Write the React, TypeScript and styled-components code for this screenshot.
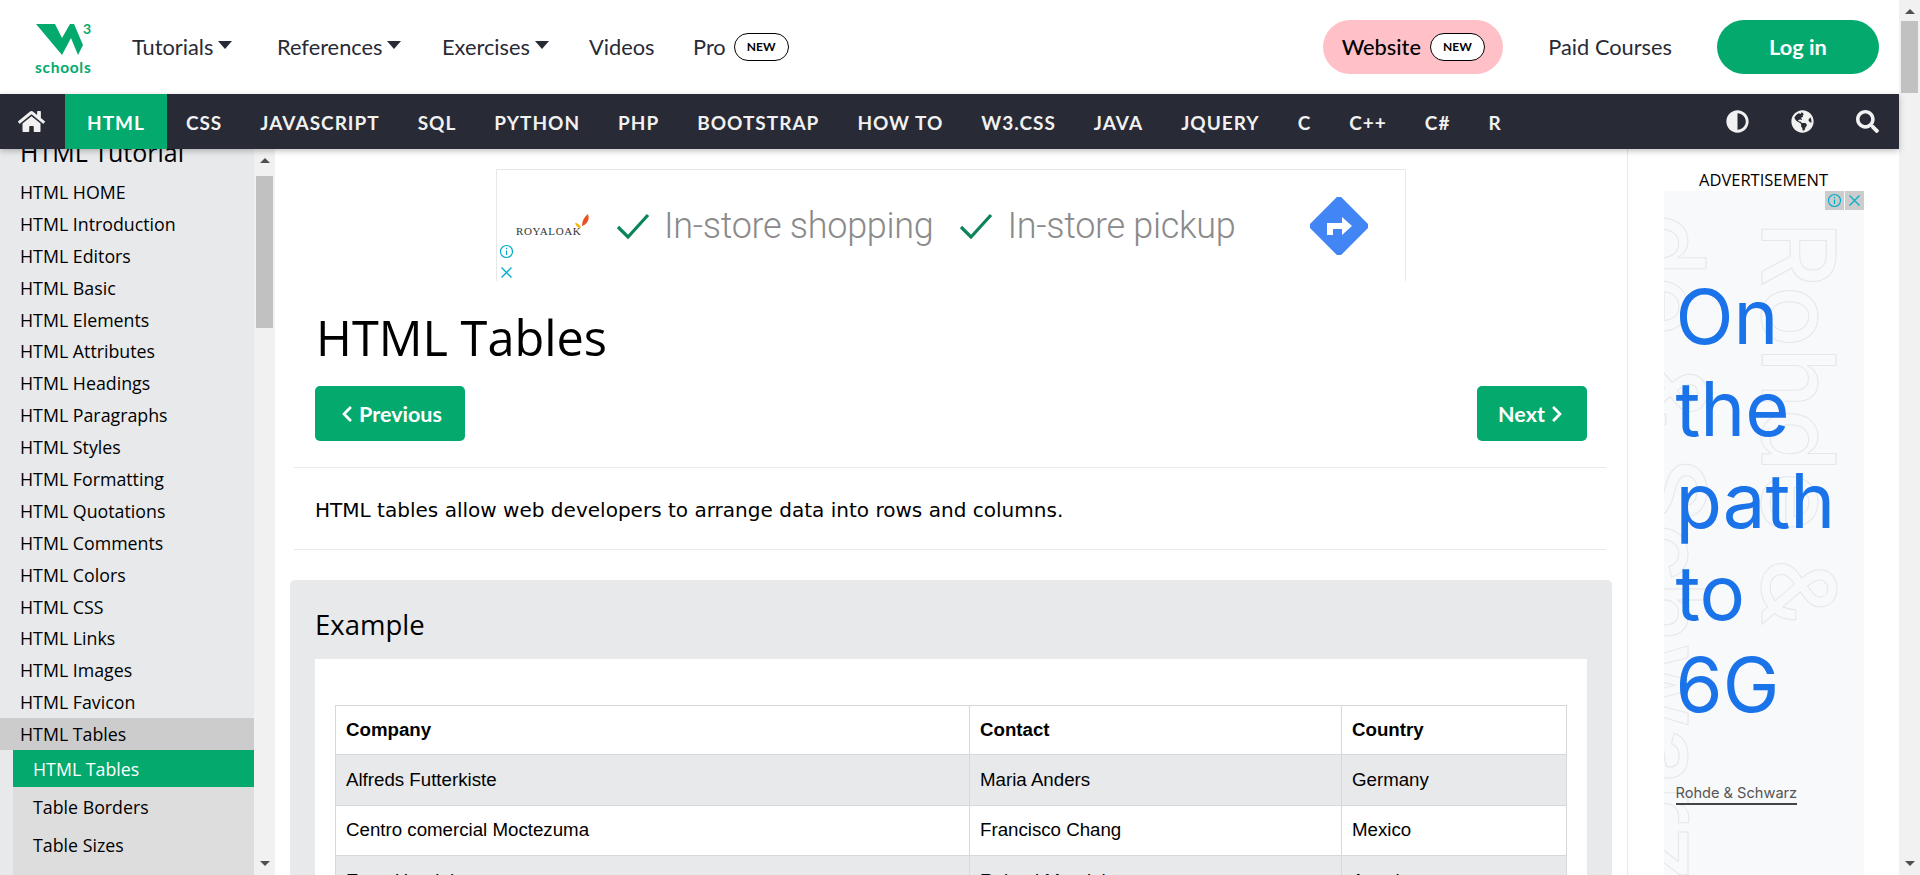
import styled, { createGlobalStyle } from 'styled-components';
import { FaAdjust, FaChevronLeft, FaChevronRight, FaGlobeAmericas, FaHome, FaSearch } from 'react-icons/fa';

const GlobalStyle = createGlobalStyle`
  html, body {
    margin: 0;
    height: 100%;
    overflow: hidden;
    background: #fff;
  }
`;

const green = '#04AA6D';
const uiFont = `"Open Sans", "Noto Sans", sans-serif`;
const navFont = `Lato, "Noto Sans", sans-serif`;

const Shell = styled.div`
  display: flex;
  height: 875px;
  width: 1920px;
  overflow: hidden;
`;

const Page = styled.div`
  flex: 1;
  min-width: 0;
  display: flex;
  flex-direction: column;
`;

const ScrollTrack = styled.div`
  width: 21px;
  flex: none;
  background: #f1f1f1;
  display: flex;
  flex-direction: column;
  align-items: center;
  height: 100%;
  box-sizing: border-box;
`;

const ScrollArrow = styled.div<{ $down?: boolean }>`
  width: 0;
  height: 0;
  margin: ${(p) => (p.$down ? 'auto 0 9px' : '9px 0 0')};
  border-left: 5px solid transparent;
  border-right: 5px solid transparent;
  ${(p) => (p.$down ? 'border-top: 5px solid #505050;' : 'border-bottom: 5px solid #505050;')}
`;

const ScrollThumb = styled.div<{ $gap: number; $height: number }>`
  width: 17px;
  height: ${(p) => p.$height}px;
  margin-top: ${(p) => p.$gap}px;
  background: #c1c1c1;
  flex: none;
`;

const TopBar = styled.header`
  height: 94px;
  flex: none;
  display: flex;
  align-items: center;
  padding: 0 20px 1px 35px;
  box-sizing: border-box;
  background: #fff;
  font-family: ${navFont};
  font-size: 21.8px;
  color: #282a35;
`;

const Logo = styled.div`
  width: 58px;
  margin: 24px 39px 0 0;
  align-self: flex-start;
  color: ${green};
  display: flex;
  flex-direction: column;
`;

const LogoMark = styled.div`
  display: flex;
  align-items: flex-start;
  height: 35px;
`;

const LogoThree = styled.span`
  font-family: ${navFont};
  font-size: 14px;
  font-weight: 700;
  line-height: 10px;
  margin-left: -1px;
`;

const LogoWord = styled.span`
  font-family: ${navFont};
  font-size: 15.5px;
  font-weight: 700;
  line-height: 16px;
  letter-spacing: 0.7px;
`;

const TopLink = styled.span<{ $width: number }>`
  width: ${(p) => p.$width}px;
  flex: none;
  display: flex;
  align-items: center;
  gap: 5px;
`;

const ProLink = styled(TopLink)`
  gap: 8px;
`;

const Caret = styled.i`
  width: 0;
  height: 0;
  margin-top: -3px;
  border-left: 7px solid transparent;
  border-right: 7px solid transparent;
  border-top: 8px solid #282a35;
`;

const NewBadge = styled.span`
  width: 55px;
  height: 28px;
  box-sizing: border-box;
  border: 1px solid #000;
  border-radius: 14px;
  background: #fff;
  color: #000;
  font-family: ${navFont};
  font-size: 12px;
  font-weight: 700;
  display: flex;
  align-items: center;
  justify-content: center;
`;

const RightGroup = styled.div`
  margin-left: auto;
  display: flex;
  align-items: center;
`;

const WebsitePill = styled.span`
  width: 180px;
  height: 54px;
  border-radius: 27px;
  background: #ffc0c7;
  color: #000;
  display: flex;
  align-items: center;
  justify-content: center;
  gap: 9px;
  font-weight: 500;
`;

const PaidLink = styled.span`
  margin: 0 45px;
`;

const LoginPill = styled.span`
  width: 162px;
  height: 54px;
  border-radius: 27px;
  background: ${green};
  color: #fff;
  font-weight: 700;
  display: flex;
  align-items: center;
  justify-content: center;
`;

const NavBar = styled.nav`
  height: 55px;
  flex: none;
  display: flex;
  align-items: stretch;
  background: #282a35;
  color: #f1f1f1;
  position: relative;
  z-index: 2;
  box-shadow: 0 2px 6px rgba(0, 0, 0, 0.25);
  font-family: ${navFont};
  font-size: 19px;
  font-weight: 700;
  letter-spacing: 1px;
`;

const NavItem = styled.span<{ $active?: boolean }>`
  padding: 1px ${(p) => (p.$active ? 22 : 19)}px 0;
  display: flex;
  align-items: center;
  background: ${(p) => (p.$active ? green : 'transparent')};
  color: ${(p) => (p.$active ? '#fff' : '#f1f1f1')};
`;

const HomeCell = styled.span`
  width: 65px;
  font-size: 27px;
  display: flex;
  align-items: center;
  justify-content: center;
  padding-right: 3px;
  box-sizing: border-box;
`;

const NavIcons = styled.div`
  margin-left: auto;
  padding-right: 20px;
  display: flex;
  align-items: center;
  gap: 42px;
  font-size: 23px;

  svg {
    display: block;
  }
`;

const Body = styled.div`
  flex: 1;
  min-height: 0;
  display: flex;
`;

const Sidebar = styled.aside`
  width: 254px;
  flex: none;
  background: #e7e9eb;
  overflow: hidden;
  font-family: ${uiFont};
  font-size: 17.8px;
  color: #000;
`;

const SideTitle = styled.div`
  height: 42px;
  margin-top: -15px;
  padding-left: 20px;
  font-size: 25px;
  line-height: 37px;
`;

const SideItem = styled.div<{ $open?: boolean }>`
  height: 31.9px;
  line-height: 33px;
  padding-left: 20px;
  white-space: nowrap;
  background: ${(p) => (p.$open ? '#ccc' : 'transparent')};
`;

const SubList = styled.div`
  margin-left: 13px;
  background: #ddd;
  height: 200px;
`;

const SubItem = styled.div<{ $active?: boolean }>`
  height: ${(p) => (p.$active ? 37 : 38)}px;
  line-height: ${(p) => (p.$active ? 39 : 41)}px;
  padding-left: 20px;
  background: ${(p) => (p.$active ? green : 'transparent')};
  color: ${(p) => (p.$active ? '#fff' : '#000')};
`;

const Main = styled.main`
  flex: 1;
  min-width: 0;
  padding: 20px 15px 0 15px;
  border-right: 1px solid #e7e9eb;
  overflow: hidden;
`;

const Banner = styled.div`
  position: relative;
  width: 910px;
  height: 112px;
  box-sizing: border-box;
  margin-left: 206px;
  border: 1px solid #e8e8e8;
  border-bottom: none;
  display: flex;
  align-items: center;
  padding: 0 0 0 19px;
  font-family: Roboto, sans-serif;
  font-size: 36px;
  font-weight: 300;
  color: #8a8a8a;
`;

const RoyalOak = styled.span`
  position: relative;
  width: 80px;
  font-family: 'Liberation Serif', serif;
  font-size: 11px;
  letter-spacing: 0.6px;
  color: #333;
  margin-top: 10px;
  flex: none;
`;

const Leaf = styled.svg`
  position: absolute;
  left: 58px;
  top: -11px;
`;

const CheckMark = styled.svg<{ $gap: number }>`
  margin: 0 14px 0 ${(p) => p.$gap}px;
  flex: none;
`;

const BannerText = styled.span`
  letter-spacing: -0.3px;
  white-space: nowrap;
`;

const DirectionSign = styled.svg`
  margin-left: auto;
  margin-right: 37px;
`;

const AdMarks = styled.div`
  position: absolute;
  left: 2px;
  top: 74px;
  display: flex;
  flex-direction: column;
  gap: 6px;
`;

const PageTitle = styled.h1`
  margin: 28px 0 0 26px;
  font-family: ${uiFont};
  font-weight: 400;
  font-size: 48.7px;
  line-height: 57px;
  color: #000;
`;

const PagerRow = styled.div`
  display: flex;
  justify-content: space-between;
  padding: 0 25px;
  margin-top: 20px;
`;

const PagerButton = styled.span<{ $width: number }>`
  width: ${(p) => p.$width}px;
  height: 55px;
  border-radius: 5px;
  background: ${green};
  color: #fff;
  font-family: ${navFont};
  font-size: 21.5px;
  font-weight: 700;
  display: flex;
  align-items: center;
  justify-content: center;
  gap: 3px;

  svg {
    font-size: 18px;
  }
`;

const Rule = styled.hr<{ $gap?: number }>`
  border: none;
  border-top: 1px solid #e7e9eb;
  margin: ${(p) => p.$gap ?? 0}px 6px 0 4px;
`;

const Intro = styled.p`
  margin: 0;
  padding: 2px 0 0 25px;
  box-sizing: border-box;
  height: 81px;
  display: flex;
  align-items: center;
  font-family: 'DejaVu Sans', Verdana, sans-serif;
  font-size: 20.05px;
  color: #000;
`;

const ExamplePanel = styled.section`
  margin-top: 30px;
  background: #e7e9eb;
  border-radius: 5px;
  padding: 0 25px;
  height: 400px;
`;

const ExampleTitle = styled.h2`
  margin: 0;
  height: 79px;
  padding-top: 10px;
  box-sizing: border-box;
  display: flex;
  align-items: center;
  font-family: ${uiFont};
  font-size: 27.5px;
  font-weight: 400;
  color: #000;
`;

const ExampleBody = styled.div`
  background: #fff;
  padding: 46px 20px 0;
  height: 320px;
`;

const DataTable = styled.table`
  width: 100%;
  table-layout: fixed;
  border-collapse: collapse;
  font-family: 'Liberation Sans', Arial, sans-serif;
  font-size: 18.7px;
  color: #000;
`;

const HeadCell = styled.th<{ $width?: number }>`
  ${(p) => (p.$width ? `width: ${p.$width}px;` : '')}
  box-sizing: border-box;
  border: 1px solid #d6d8da;
  height: 49.33px;
  padding: 0 10px;
  text-align: left;
  font-weight: 700;
`;

const DataRow = styled.tr`
  &:nth-child(odd) {
    background: #e7e9eb;
  }
`;

const DataCell = styled.td`
  border: 1px solid #d6d8da;
  height: 49.33px;
  padding: 0 10px;
`;

const AdColumn = styled.aside`
  width: 271px;
  flex: none;
  display: flex;
  flex-direction: column;
  align-items: center;
`;

const AdLabel = styled.div`
  height: 42px;
  padding-top: 21px;
  box-sizing: border-box;
  line-height: 20px;
  font-family: ${uiFont};
  font-size: 16.5px;
  color: #000;
`;

const TowerAd = styled.div`
  position: relative;
  width: 200px;
  flex: 1;
  overflow: hidden;
  background: #f8f9fb;
  padding: 79px 0 0 12px;
  box-sizing: border-box;
  display: flex;
  flex-direction: column;
`;

const GhostWord = styled.span<{ $left: number; $top: number }>`
  position: absolute;
  left: ${(p) => p.$left}px;
  top: ${(p) => p.$top}px;
  writing-mode: vertical-rl;
  font-family: Inter, sans-serif;
  font-size: 102px;
  font-weight: 500;
  line-height: 1;
  white-space: nowrap;
  color: transparent;
  -webkit-text-stroke: 1px #e6e7ea;
`;

const Headline = styled.div`
  position: relative;
  font-family: Inter, sans-serif;
  font-size: 76px;
  line-height: 92px;
  color: #1a73e8;
`;

const Advertiser = styled.span`
  position: relative;
  align-self: flex-start;
  margin: 54px 0 0 0;
  padding-bottom: 1px;
  border-bottom: 2px solid #444;
  font-family: Inter, sans-serif;
  font-size: 14.6px;
  color: #555;
`;

const AdControls = styled.div`
  position: absolute;
  right: 0;
  top: 0;
  display: flex;
  gap: 1px;
`;

const AdControl = styled.span`
  width: 19px;
  height: 19px;
  background: #ccc;
  display: flex;
  align-items: center;
  justify-content: center;
`;

const topicLinks = [
  'HTML HOME', 'HTML Introduction', 'HTML Editors', 'HTML Basic', 'HTML Elements', 'HTML Attributes',
  'HTML Headings', 'HTML Paragraphs', 'HTML Styles', 'HTML Formatting', 'HTML Quotations', 'HTML Comments',
  'HTML Colors', 'HTML CSS', 'HTML Links', 'HTML Images', 'HTML Favicon',
];

const navLinks = ['CSS', 'JAVASCRIPT', 'SQL', 'PYTHON', 'PHP', 'BOOTSTRAP', 'HOW TO', 'W3.CSS', 'JAVA', 'JQUERY', 'C', 'C++', 'C#', 'R'];

const rows = [
  ['Alfreds Futterkiste', 'Maria Anders', 'Germany'],
  ['Centro comercial Moctezuma', 'Francisco Chang', 'Mexico'],
  ['Ernst Handel', 'Roland Mendel', 'Austria'],
];

function InfoIcon() {
  return (
    <svg width="15" height="15" viewBox="0 0 15 15" fill="none" stroke="#00aecd" strokeWidth="1.2">
      <circle cx="7.5" cy="7.5" r="6" />
      <path d="M7.5 6.5v4.5M7.5 3.8v1.4" />
    </svg>
  );
}

function CloseIcon() {
  return (
    <svg width="15" height="15" viewBox="0 0 15 15" fill="none" stroke="#00aecd" strokeWidth="1.3">
      <path d="M2.5 2.5l10 10M12.5 2.5l-10 10" />
    </svg>
  );
}

function Check({ gap }: { gap: number }) {
  return (
    <CheckMark $gap={gap} width="34" height="26" viewBox="0 0 34 26" fill="none" stroke="#0b8457" strokeWidth="3.2">
      <path d="M2 14l10 10L32 2" />
    </CheckMark>
  );
}

export default function App() {
  return (
    <>
      <GlobalStyle />
      <Shell>
        <Page>
          <TopBar>
            <Logo>
              <LogoMark>
                <svg width="49" height="32" viewBox="0 0 49 32" fill="currentColor">
                  <path d="M1 0H20L27 14L35 0H39L48 21L43 31L36 14L27 31Z" />
                </svg>
                <LogoThree>3</LogoThree>
              </LogoMark>
              <LogoWord>schools</LogoWord>
            </Logo>
            <TopLink $width={145}>Tutorials<Caret /></TopLink>
            <TopLink $width={165}>References<Caret /></TopLink>
            <TopLink $width={147}>Exercises<Caret /></TopLink>
            <TopLink $width={104}>Videos</TopLink>
            <ProLink $width={110}>Pro<NewBadge>NEW</NewBadge></ProLink>
            <RightGroup>
              <WebsitePill>Website<NewBadge>NEW</NewBadge></WebsitePill>
              <PaidLink>Paid Courses</PaidLink>
              <LoginPill>Log in</LoginPill>
            </RightGroup>
          </TopBar>

          <NavBar>
            <HomeCell><FaHome /></HomeCell>
            <NavItem $active>HTML</NavItem>
            {navLinks.map((link) => (
              <NavItem key={link}>{link}</NavItem>
            ))}
            <NavIcons>
              <FaAdjust />
              <FaGlobeAmericas />
              <FaSearch />
            </NavIcons>
          </NavBar>

          <Body>
            <Sidebar>
              <SideTitle>HTML Tutorial</SideTitle>
              {topicLinks.map((link) => (
                <SideItem key={link}>{link}</SideItem>
              ))}
              <SideItem $open>HTML Tables</SideItem>
              <SubList>
                <SubItem $active>HTML Tables</SubItem>
                <SubItem>Table Borders</SubItem>
                <SubItem>Table Sizes</SubItem>
              </SubList>
            </Sidebar>
            <ScrollTrack>
              <ScrollArrow />
              <ScrollThumb $gap={13} $height={152} />
              <ScrollArrow $down />
            </ScrollTrack>

            <Main>
              <Banner>
                <RoyalOak>
                  ROYALOAK
                  <Leaf width="16" height="18" viewBox="0 0 16 18">
                    <path d="M14 0c2 6-1 10-6 12 0-5 2-9 6-12z" fill="#e8501f" />
                    <path d="M1 9c3 0 5 2 6 5-3 0-5-2-6-5z" fill="#f5b400" />
                  </Leaf>
                </RoyalOak>
                <Check gap={20} />
                <BannerText>In-store shopping</BannerText>
                <Check gap={26} />
                <BannerText>In-store pickup</BannerText>
                <DirectionSign width="58" height="58" viewBox="0 0 58 58">
                  <path d="M29 0L58 29L29 58L0 29Z" fill="#4285f4" stroke="#4285f4" strokeWidth="3" strokeLinejoin="round" />
                  <path d="M20 39V27h15v-6l10 9-10 9v-6h-9v6z" fill="#fff" transform="translate(-3 -1)" />
                </DirectionSign>
                <AdMarks>
                  <InfoIcon />
                  <CloseIcon />
                </AdMarks>
              </Banner>

              <PageTitle>HTML Tables</PageTitle>

              <PagerRow>
                <PagerButton $width={150}><FaChevronLeft />Previous</PagerButton>
                <PagerButton $width={110}>Next<FaChevronRight /></PagerButton>
              </PagerRow>

              <Rule $gap={26} />
              <Intro>HTML tables allow web developers to arrange data into rows and columns.</Intro>
              <Rule />

              <ExamplePanel>
                <ExampleTitle>Example</ExampleTitle>
                <ExampleBody>
                  <DataTable>
                    <thead>
                      <tr>
                        <HeadCell $width={634}>Company</HeadCell>
                        <HeadCell $width={372}>Contact</HeadCell>
                        <HeadCell>Country</HeadCell>
                      </tr>
                    </thead>
                    <tbody>
                      {rows.map((row) => (
                        <DataRow key={row[0]}>
                          {row.map((cell) => (
                            <DataCell key={cell}>{cell}</DataCell>
                          ))}
                        </DataRow>
                      ))}
                    </tbody>
                  </DataTable>
                </ExampleBody>
              </ExamplePanel>
            </Main>

            <AdColumn>
              <AdLabel>ADVERTISEMENT</AdLabel>
              <TowerAd>
                <GhostWord $left={84} $top={30}>Rohde &amp;</GhostWord>
                <GhostWord $left={-46} $top={22}>de &amp; Schwarz</GhostWord>
                <Headline>On<br />the<br />path<br />to<br />6G</Headline>
                <Advertiser>Rohde &amp; Schwarz</Advertiser>
                <AdControls>
                  <AdControl><InfoIcon /></AdControl>
                  <AdControl><CloseIcon /></AdControl>
                </AdControls>
              </TowerAd>
            </AdColumn>
          </Body>
        </Page>
        <ScrollTrack>
          <ScrollArrow />
          <ScrollThumb $gap={7} $height={72} />
          <ScrollArrow $down />
        </ScrollTrack>
      </Shell>
    </>
  );
}
